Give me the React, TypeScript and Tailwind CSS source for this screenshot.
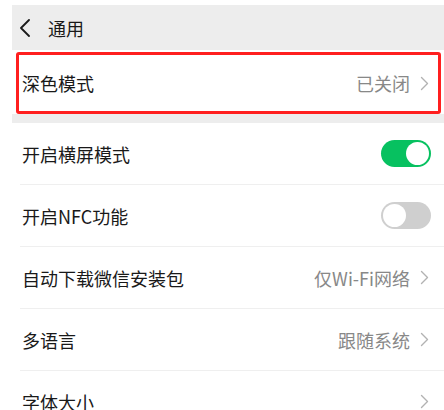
import React from "react";

const font = { fontFamily: '"Noto Sans CJK SC", "Noto Sans", sans-serif' };

function Chevron() {
  return (
    <svg width="9" height="15" viewBox="0 0 9 15" className="shrink-0">
      <path d="M1.5 1.5 L7.5 7.5 L1.5 13.5" fill="none" stroke="#b2b2b2" strokeWidth="1.4" strokeLinecap="round" strokeLinejoin="round" />
    </svg>
  );
}

function Toggle({ on }: { on: boolean }) {
  return on ? (
    <div className="w-[50px] h-[27px] rounded-full bg-[#07c160] flex items-center justify-end pr-[2px] shrink-0">
      <div className="w-[23px] h-[23px] rounded-full bg-white" />
    </div>
  ) : (
    <div className="w-[50px] h-[27px] rounded-full bg-[#cfcfcf] flex items-center justify-start pl-[2px] shrink-0">
      <div className="w-[23px] h-[23px] rounded-full bg-white" />
    </div>
  );
}

function Row({ label, value, toggle }: { label: string; value?: string; toggle?: boolean | null }) {
  const isToggle = toggle !== undefined && toggle !== null;
  return (
    <div className="pl-[8px] bg-white">
      <div className={`h-[62px] border-b border-[#efefef] flex items-center pl-[2px] ${isToggle ? "pr-[13px]" : "pr-[15px]"}`}>
        <span className="text-[18px] text-[#191919] leading-none flex-1">{label}</span>
        {isToggle ? (
          <Toggle on={!!toggle} />
        ) : (
          <div className="flex items-center gap-[10px]">
            {value ? <span className="text-[18px] text-[#888888] leading-none">{value}</span> : null}
            <Chevron />
          </div>
        )}
      </div>
    </div>
  );
}

export default function App() {
  return (
    <div className="w-[444px] h-[410px] overflow-hidden bg-white pt-[5px] pl-[12px]" style={font}>
      <div className="h-[45px] bg-[#ededed] flex items-center pl-[7px]">
        <svg width="12" height="18" viewBox="0 0 12 18" className="shrink-0">
          <path d="M10 1 L2 9 L10 17" fill="none" stroke="#1a1a1a" strokeWidth="1.8" strokeLinecap="round" strokeLinejoin="round" />
        </svg>
        <span className="ml-[17px] text-[18px] text-[#191919] leading-none">通用</span>
      </div>
      <div className="bg-white pt-[2px] pl-[4px] pr-[3px]">
        <div className="h-[62px] border-[3px] border-[#ff1f1f] rounded-[3px] bg-white flex items-center pl-[3px] pr-[9px]">
          <span className="text-[18px] text-[#191919] leading-none flex-1">深色模式</span>
          <div className="flex items-center gap-[10px]">
            <span className="text-[18px] text-[#888888] leading-none">已关闭</span>
            <Chevron />
          </div>
        </div>
      </div>
      <div className="h-[9px] bg-[#ededed]" />
      <Row label="开启横屏模式" toggle={true} />
      <Row label="开启NFC功能" toggle={false} />
      <Row label="自动下载微信安装包" value="仅Wi-Fi网络" />
      <Row label="多语言" value="跟随系统" />
      <Row label="字体大小" />
    </div>
  );
}
